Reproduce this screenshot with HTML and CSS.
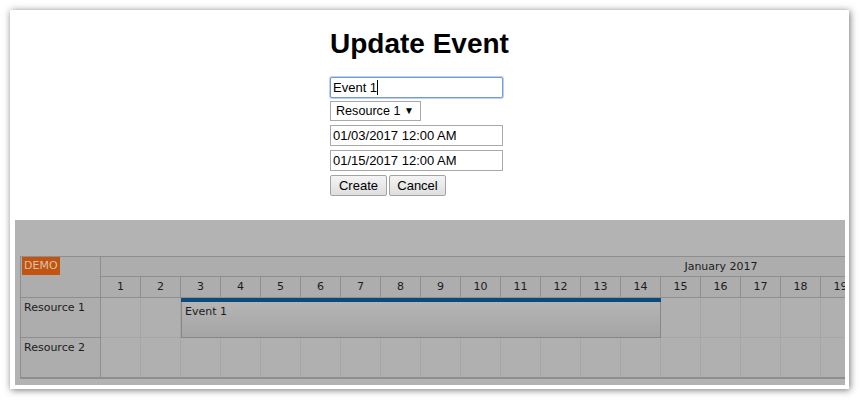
FILE: index.html
```html
<!DOCTYPE html>
<html>
<head>
<meta charset="utf-8">
<title>Update Event</title>
<link rel="stylesheet" href="styles.css">
</head>
<body>
<div class="frame">
  <div class="modal">
    <h1>Update Event</h1>
    <form class="form">
      <div class="field first">
        <input class="text focus" type="text" value="Event 1">
        <span class="caret"></span>
      </div>
      <div class="select"><span>Resource 1</span><span class="arrow">▼</span></div>
      <input class="text" type="text" value="01/03/2017 12:00 AM">
      <input class="text" type="text" value="01/15/2017 12:00 AM">
      <div class="buttons">
        <button type="button" class="btn">Create</button>
        <button type="button" class="btn">Cancel</button>
      </div>
    </form>
  </div>
  <div class="overlay">
    <div class="scheduler">
      <div class="corner"><span class="demo">DEMO</span></div>
      <div class="timeheader">
        <div class="month">January 2017</div>
        <div class="days">
          <div class="day">1</div><div class="day">2</div><div class="day">3</div><div class="day">4</div><div class="day">5</div><div class="day">6</div><div class="day">7</div><div class="day">8</div><div class="day">9</div><div class="day">10</div><div class="day">11</div><div class="day">12</div><div class="day">13</div><div class="day">14</div><div class="day">15</div><div class="day">16</div><div class="day">17</div><div class="day">18</div><div class="day">19</div>
        </div>
      </div>
      <div class="rowheader">Resource 1</div>
      <div class="cells">
        <div class="cell"></div><div class="cell"></div><div class="cell"></div><div class="cell"></div><div class="cell"></div><div class="cell"></div><div class="cell"></div><div class="cell"></div><div class="cell"></div><div class="cell"></div><div class="cell"></div><div class="cell"></div><div class="cell"></div><div class="cell"></div><div class="cell"></div><div class="cell"></div><div class="cell"></div><div class="cell"></div><div class="cell"></div>
        <div class="event" style="left:80px;width:480px;">
          <div class="event-bar"></div>
          <div class="event-body">Event 1</div>
        </div>
      </div>
      <div class="rowheader">Resource 2</div>
      <div class="cells">
        <div class="cell"></div><div class="cell"></div><div class="cell"></div><div class="cell"></div><div class="cell"></div><div class="cell"></div><div class="cell"></div><div class="cell"></div><div class="cell"></div><div class="cell"></div><div class="cell"></div><div class="cell"></div><div class="cell"></div><div class="cell"></div><div class="cell"></div><div class="cell"></div><div class="cell"></div><div class="cell"></div><div class="cell"></div>
      </div>
    </div>
  </div>
</div>
</body>
</html>
```
FILE: styles.css
```css
* { box-sizing: border-box; }
html, body { margin: 0; padding: 0; background: #fff; }
body { width: 860px; height: 400px; overflow: hidden; }

.frame {
  margin: 10px 0 0 10px;
  width: 839px;
  height: 379px;
  background: #fff;
  box-shadow: 1px 1px 7px rgba(0, 0, 0, 0.55);
  display: flex;
  flex-direction: column;
}

.modal {
  height: 210px;
  flex: none;
  padding: 18px 0 0 320px;
  font-family: "Liberation Sans", Arial, sans-serif;
}
.modal h1 {
  margin: 0 0 17px;
  font-size: 28px;
  line-height: 32px;
  font-weight: bold;
  color: #000;
}

.form {
  display: flex;
  flex-direction: column;
  align-items: flex-start;
  gap: 4px;
  margin: 0;
}
.field { position: relative; }
.field.first { margin-bottom: -1px; }
.caret {
  position: absolute;
  left: 47px;
  top: 3px;
  width: 1px;
  height: 15px;
  background: #000;
}

.text {
  width: 173px;
  height: 21px;
  margin: 0;
  padding: 0 2px;
  border: 1px solid #a9a9a9;
  font-family: "Liberation Sans", Arial, sans-serif;
  font-size: 13px;
  color: #000;
  background: #fff;
  outline: none;
  display: block;
}
.text.focus {
  border-color: #729ad8;
  border-radius: 2px;
  box-shadow: 0 0 0 1px rgba(114, 154, 216, 0.45);
}

.select {
  width: 91px;
  height: 20px;
  border: 1px solid #a9a9a9;
  background: #fff;
  display: flex;
  align-items: center;
  justify-content: space-between;
  padding: 0 6px 0 5px;
  font-size: 12.6px;
  color: #000;
}
.select .arrow { font-size: 10px; line-height: 1; }

.buttons { display: flex; gap: 2px; }
.btn {
  height: 21px;
  width: 57px;
  padding: 0;
  margin: 0;
  border: 1px solid #a3a3a3;
  border-radius: 2px;
  background: linear-gradient(#f4f4f4, #dedede);
  font-family: "Liberation Sans", Arial, sans-serif;
  font-size: 13px;
  color: #000;
}

.overlay {
  flex: none;
  height: 165px;
  margin: 0 4px 0 5px;
  background: #b3b3b3;
  padding: 36px 0 0 5px;
  overflow: hidden;
}

.scheduler {
  display: grid;
  grid-template-columns: 80px 1240px;
  width: 1322px;
  border-top: 1px solid #8e8e8e;
  border-left: 1px solid #8e8e8e;
  border-bottom: 1px solid #8e8e8e;
  font-family: "DejaVu Sans", Verdana, sans-serif;
  font-size: 11px;
  color: #1c1c1c;
}

.corner {
  height: 41px;
  background: #adadad;
  border-right: 1px solid #8e8e8e;
  border-bottom: 1px solid #8e8e8e;
  padding: 0 0 0 1px;
}
.demo {
  display: inline-block;
  height: 18px;
  line-height: 18px;
  padding: 0 2px;
  background: #c2540f;
  color: #d6c2ae;
}

.timeheader { display: flex; flex-direction: column; }
.month {
  height: 20px;
  line-height: 19px;
  text-align: center;
  background: #adadad;
  border-bottom: 1px solid #8e8e8e;
}
.days { display: flex; }
.day {
  width: 40px;
  height: 21px;
  line-height: 20px;
  text-align: center;
  background: #adadad;
  border-right: 1px solid #8e8e8e;
  border-bottom: 1px solid #8e8e8e;
}

.rowheader {
  height: 40px;
  padding: 3px 0 0 3px;
  line-height: 14px;
  background: #adadad;
  border-right: 1px solid #8e8e8e;
  border-bottom: 1px solid #8e8e8e;
}
.cells {
  display: flex;
  position: relative;
}
.cell {
  width: 40px;
  height: 40px;
  background: #b0b0b0;
  border-right: 1px solid #a6a6a6;
  border-bottom: 1px solid #a6a6a6;
}
.cells:last-child .cell { border-bottom-color: #8e8e8e; }

.event {
  position: absolute;
  top: 0;
  height: 40px;
  display: flex;
  flex-direction: column;
}
.event-bar { height: 4px; background: #0c4a7a; flex: none; }
.event-body {
  flex: 1;
  border: 1px solid #878787;
  border-top: none;
  background: linear-gradient(#b5b5b5, #a5a5a5);
  padding: 3px 0 0 3px;
  line-height: 14px;
}
```
